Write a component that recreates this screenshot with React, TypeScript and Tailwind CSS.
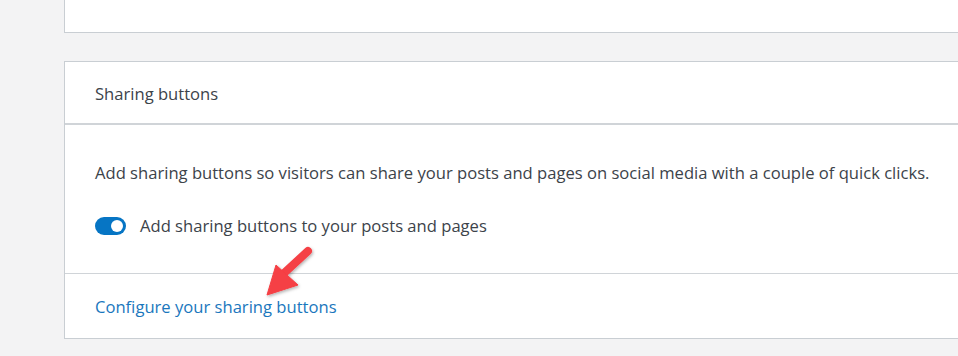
import React from "react";

function Toggle() {
  return (
    <span className="relative inline-flex h-[18px] w-[31px] shrink-0 items-center rounded-full bg-[#0675c4]">
      <span className="absolute right-[3px] h-[12px] w-[12px] rounded-full bg-white" />
    </span>
  );
}

function Arrow() {
  return (
    <svg
      className="pointer-events-none absolute left-[195px] top-[180px]"
      width="60"
      height="60"
      viewBox="0 0 60 60"
    >
      <defs>
        <filter id="sh" x="-30%" y="-30%" width="160%" height="160%">
          <feDropShadow dx="1" dy="1.5" stdDeviation="1.5" floodColor="#000" floodOpacity="0.3" />
        </filter>
      </defs>
      <g filter="url(#sh)" fill="#f53f44" stroke="#f53f44">
        <line x1="48" y1="9" x2="22" y2="33" strokeWidth="8" strokeLinecap="round" />
        <polygon points="7,53 16,23 38,43" strokeWidth="1" strokeLinejoin="round" />
      </g>
    </svg>
  );
}

export default function App() {
  return (
    <div className="h-[356px] w-full overflow-hidden bg-[#f3f3f4] pl-[64px] font-['Open_Sans',sans-serif] text-[16.6px] text-[#3c434a]">
      <div className="h-[33px] border-b border-l border-[#c9ced3] bg-white" />

      <div className="relative mt-[28px] border-y border-l border-[#c9ced3] bg-white">
        <div className="flex h-[63px] items-center border-b-2 border-[#d0d4d8] pl-[30px] pt-[4px]">
          Sharing buttons
        </div>

        <div className="pb-[38px] pl-[30px] pt-[36px]">
          <p className="leading-[24px]">
            Add sharing buttons so visitors can share your posts and pages on social media with a couple of quick clicks.
          </p>
          <label className="mt-[32px] flex h-[18px] items-center gap-[14px]">
            <Toggle />
            <span>Add sharing buttons to your posts and pages</span>
          </label>
        </div>

        <div className="flex h-[65px] items-center border-t border-[#d0d4d8] pl-[30px] pt-[3px]">
          <a className="text-[#1a77bd]">Configure your sharing buttons</a>
        </div>

        <Arrow />
      </div>
    </div>
  );
}
